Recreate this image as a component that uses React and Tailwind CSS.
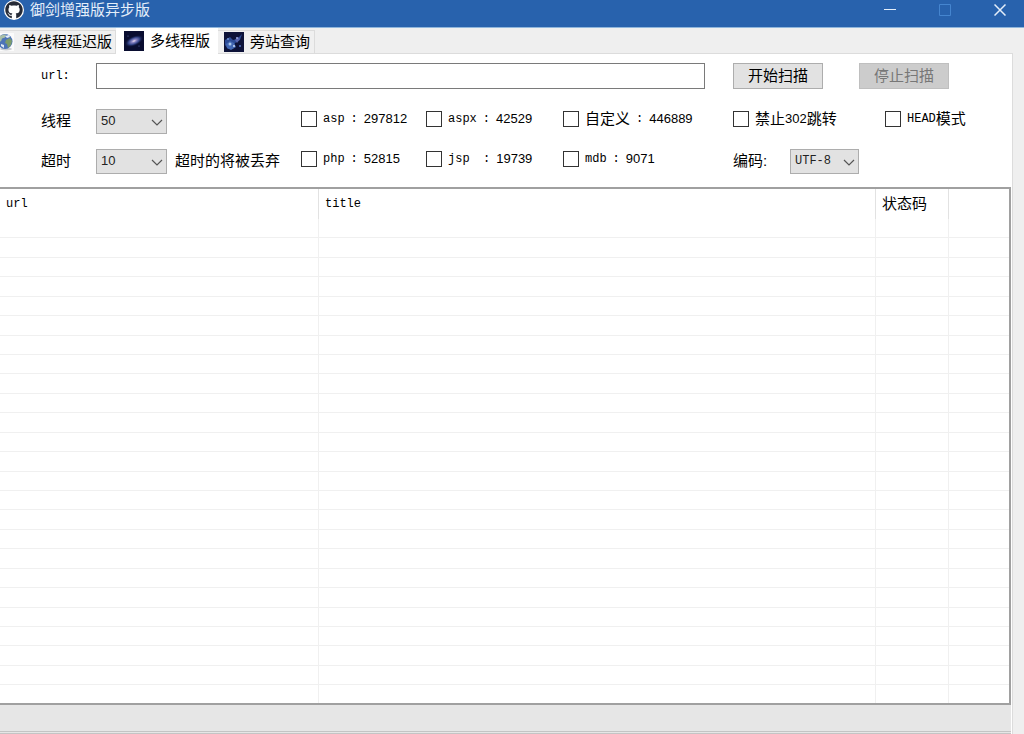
import React, { useState } from "react";
import { FaGithub } from "react-icons/fa";

const extensoes = [
  { id: "asp", nome: "asp", total: "297812" },
  { id: "aspx", nome: "aspx", total: "42529" },
  { id: "custom", nome: "自定义", total: "446889" },
  { id: "php", nome: "php", total: "52815" },
  { id: "jsp", nome: "jsp", total: "19739", largo: true },
  { id: "mdb", nome: "mdb", total: "9071" },
];

const linhas = Array.from({ length: 25 }, (_, i) => i);

const fonteMono =
  "font-['Liberation_Mono','Noto_Sans_CJK_SC',monospace] text-[12px]";

// a última linha aparece cortada
const alturaLinha = (i) => {
  if (i === linhas.length - 1) return "h-[18px]";
  return [1, 3, 5].includes(i % 7) ? "h-5" : "h-[19px]";
};

function IconeGlobo() {
  return (
    <svg className="-ml-1 h-[18px] w-[18px] shrink-0" viewBox="0 0 18 18">
      <rect width="18" height="18" fill="#fbfbfb" />
      <ellipse cx="10" cy="16" rx="6" ry="1.5" fill="#c9ccd0" />
      <circle cx="9" cy="8.5" r="7.5" fill="#4d74b8" />
      <path d="M3 4q3-3 7-2.5l-1 3-3 1-1 3-3-1z" fill="#a9bfa6" />
      <path d="M10 7l4-2 2 3-1 4-3 3-1-4-2-1z" fill="#7d9c6a" />
      <path d="M5 11l3 1 0 3-3-2z" fill="#dfe8f3" />
      <path d="M9 3l4-1 1 2-3 1z" fill="#e6eef8" />
    </svg>
  );
}

function IconeGalaxia() {
  return (
    <svg className="h-5 w-5 shrink-0" viewBox="0 0 20 20">
      <defs>
        <radialGradient id="galaxia">
          <stop offset="0" stopColor="#f0dff0" />
          <stop offset="0.25" stopColor="#8b86c4" />
          <stop offset="0.6" stopColor="#344488" />
          <stop offset="1" stopColor="#0b1238" stopOpacity="0" />
        </radialGradient>
      </defs>
      <rect width="20" height="20" fill="#090d30" />
      <ellipse
        cx="10"
        cy="10"
        rx="10"
        ry="5"
        fill="url(#galaxia)"
        transform="rotate(-24 10 10)"
      />
      <circle cx="4" cy="5" r="0.5" fill="#6f7fc0" />
      <circle cx="15" cy="15" r="0.5" fill="#6f7fc0" />
    </svg>
  );
}

function IconeNebulosa() {
  return (
    <svg className="h-5 w-5 shrink-0" viewBox="0 0 20 20">
      <rect width="20" height="20" fill="#0d1238" />
      <path d="M1 8l5-3 3 3 4-1 5-5-2 6-5 3-2 5-5 1-3-4z" fill="#2c4a94" />
      <path d="M2 12l4-3 4 2 2 4-5 3-4-2z" fill="#4267b3" />
      <path d="M11 8l3-3 2 2-3 4z" fill="#5763ad" />
      <circle cx="6" cy="12" r="1.5" fill="#a9c6ea" />
      <circle cx="10" cy="14" r="1" fill="#c8d9f2" />
      <circle cx="13" cy="6" r="1" fill="#9aa8e0" />
      <circle cx="4" cy="7" r="1" fill="#6f93d2" />
      <circle cx="16" cy="14" r="1" fill="#5673c0" />
    </svg>
  );
}

function Seletor({ id, largura, fonte, opcoes }) {
  return (
    <span className={`relative inline-flex ${largura}`}>
      <select
        id={id}
        className={`h-[25px] w-full appearance-none border border-[#adadad] bg-[#e2e2e2] pl-1 text-[#222] ${fonte}`}
      >
        {opcoes.map((o) => (
          <option key={o}>{o}</option>
        ))}
      </select>
      <svg
        className="pointer-events-none absolute top-2 right-1 h-[10px] w-3"
        viewBox="0 0 12 10"
        fill="none"
        stroke="#555"
        strokeWidth="1.2"
      >
        <path d="M1 3l5 5 5-5" />
      </svg>
    </span>
  );
}

function Caixa({ id, children }) {
  return (
    <div className="flex items-center gap-1.5 pb-1">
      <input
        id={id}
        type="checkbox"
        className="h-4 w-4 shrink-0 appearance-none border border-[#333] bg-white checked:bg-[#2862ad]"
      />
      <label htmlFor={id} className="flex items-center whitespace-nowrap">
        {children}
      </label>
    </div>
  );
}

function Extensao({ item }) {
  const cjk = item.id === "custom";
  return (
    <Caixa id={item.id}>
      <span className="flex items-center gap-1.5">
        <span
          className={`${cjk ? "" : fonteMono} ${item.largo ? "min-w-[29px]" : ""}`}
        >
          {item.nome}
        </span>
        <span className={fonteMono}>:</span>
        <span className="text-[13px]">{item.total}</span>
      </span>
    </Caixa>
  );
}

export default function App() {
  const [url, setUrl] = useState("");

  return (
    <div className="flex min-h-screen flex-col bg-[#efefef] font-['Liberation_Sans','Noto_Sans_CJK_SC',sans-serif] text-[15px] leading-5 text-black">
      {/* Barra de título */}
      <header className="flex h-[28px] items-start justify-between border-b border-[#8fb6dc] bg-[#2862ad] text-[#e4eefa]">
        <h1 className="flex items-center gap-1.5 pl-1">
          <span className="flex h-5 w-5 items-center justify-center rounded-full bg-white">
            <FaGithub className="h-[18px] w-[18px] text-[#252a36]" />
          </span>
          御剑增强版异步版
        </h1>
        <div className="flex gap-[7px]">
          <button aria-label="最小化" className="flex h-5 w-12 items-center justify-center">
            <svg width="12" height="12" viewBox="0 0 12 12" stroke="currentColor">
              <path d="M0 5.5h12" />
            </svg>
          </button>
          <button
            aria-label="最大化"
            disabled
            className="flex h-5 w-12 items-center justify-center text-[#4585cf]"
          >
            <svg width="12" height="12" viewBox="0 0 12 12" fill="none" stroke="currentColor">
              <path d="M.5.5h11v11H.5z" />
            </svg>
          </button>
          <button aria-label="关闭" className="flex h-5 w-12 items-center justify-center">
            <svg width="12" height="12" viewBox="0 0 12 12" stroke="currentColor" strokeWidth="1.5">
              <path d="M.5.5l11 11M11.5.5l-11 11" />
            </svg>
          </button>
        </div>
      </header>

      {/* Abas */}
      <nav role="tablist" className="flex h-[25px] items-end">
        <button
          role="tab"
          aria-selected="false"
          className="flex h-[23px] items-center gap-2 border-t border-r border-[#dcdcdc] bg-[#f0f0f0] pr-[3px]"
        >
          <IconeGlobo />
          单线程延迟版
        </button>
        <button
          role="tab"
          aria-selected="true"
          className="relative -mb-px flex h-[26px] items-center gap-1.5 bg-white pr-2 pl-2"
        >
          <IconeGalaxia />
          多线程版
        </button>
        <button
          role="tab"
          aria-selected="false"
          className="flex h-[23px] items-center gap-1.5 border-t border-r border-[#dcdcdc] bg-[#f0f0f0] pr-1 pl-1.5"
        >
          <IconeNebulosa />
          旁站查询
        </button>
      </nav>

      <main className="mr-[11px] flex grow flex-col border-t border-r border-[#dcdcdc] bg-white">
        {/* Formulário */}
        <form
          onSubmit={(e) => e.preventDefault()}
          className="grid grid-cols-[55px_205fr_125fr_137fr_170fr_152fr_127fr] grid-rows-[38px_40px_40px] items-center pt-[9px] pb-1.5 pl-[41px]"
        >
          <label htmlFor="url" className={`${fonteMono} pb-3`}>
            url:
          </label>
          <div className="col-span-4 pr-[28px] pb-3">
            <input
              id="url"
              type="text"
              value={url}
              onChange={(e) => setUrl(e.target.value)}
              className="block h-[26px] w-full border border-[#7a7a7a] bg-white px-1"
            />
          </div>
          <div className="col-span-2 flex gap-9 pb-3">
            <button
              type="submit"
              className="h-[26px] w-[90px] border border-[#adadad] bg-[#e2e2e2]"
            >
              开始扫描
            </button>
            <button
              type="button"
              disabled
              className="h-[26px] w-[90px] border border-[#bfbfbf] bg-[#cccccc] text-[#777]"
            >
              停止扫描
            </button>
          </div>

          <label htmlFor="threads">线程</label>
          <div className="flex items-center">
            <Seletor
              id="threads"
              largura="w-[71px]"
              fonte="text-[13px]"
              opcoes={["50", "100"]}
            />
          </div>
          {extensoes.slice(0, 3).map((item) => (
            <Extensao key={item.id} item={item} />
          ))}
          <Caixa id="noredirect">
            禁止<span className="text-[13px]">302</span>跳转
          </Caixa>
          <Caixa id="head">
            <span className={fonteMono}>HEAD</span>模式
          </Caixa>

          <label htmlFor="timeout">超时</label>
          <div className="flex items-center gap-2 whitespace-nowrap">
            <Seletor
              id="timeout"
              largura="w-[71px]"
              fonte="text-[13px]"
              opcoes={["10", "20"]}
            />
            超时的将被丢弃
          </div>
          {extensoes.slice(3).map((item) => (
            <Extensao key={item.id} item={item} />
          ))}
          <div className="col-span-2 flex items-center">
            <label htmlFor="charset" className="w-[57px]">
              编码:
            </label>
            <Seletor
              id="charset"
              largura="w-[69px]"
              fonte={fonteMono}
              opcoes={["UTF-8", "GBK"]}
            />
          </div>
        </form>

        {/* Resultados */}
        <div className="mr-px border-t-2 border-r-2 border-b-2 border-[#a0a0a0]">
          <table className="w-full table-fixed border-separate border-spacing-0">
            <colgroup>
              <col className="w-[319px]" />
              <col />
              <col className="w-[73px]" />
              <col className="w-[60px]" />
            </colgroup>
            <thead>
              <tr className="h-[30px] text-left">
                <th className={`border-r border-[#e2e2e2] p-0 pl-1.5 font-normal ${fonteMono}`}>
                  url
                </th>
                <th className={`border-r border-[#e2e2e2] p-0 pl-1.5 font-normal ${fonteMono}`}>
                  title
                </th>
                <th className="border-r border-[#e2e2e2] p-0 pl-1.5 font-normal">
                  状态码
                </th>
                <td className="p-0" />
              </tr>
            </thead>
            <tbody>
              {linhas.map((i) => {
                const borda =
                  i === linhas.length - 1
                    ? "border-[#f0f0f0] p-0"
                    : "border-b border-[#f0f0f0] p-0";
                return (
                  <tr key={i} className={alturaLinha(i)}>
                    <td className={`${borda} border-r`} />
                    <td className={`${borda} border-r`} />
                    <td className={`${borda} border-r`} />
                    <td className={borda} />
                  </tr>
                );
              })}
            </tbody>
          </table>
        </div>

        {/* Barra de status */}
        <footer className="mr-px flex min-h-[29px] grow flex-col justify-end bg-[#e6e6e6]">
          <div className="h-[3px] border-t border-b border-[#c4c4c4]" />
        </footer>
      </main>
    </div>
  );
}
